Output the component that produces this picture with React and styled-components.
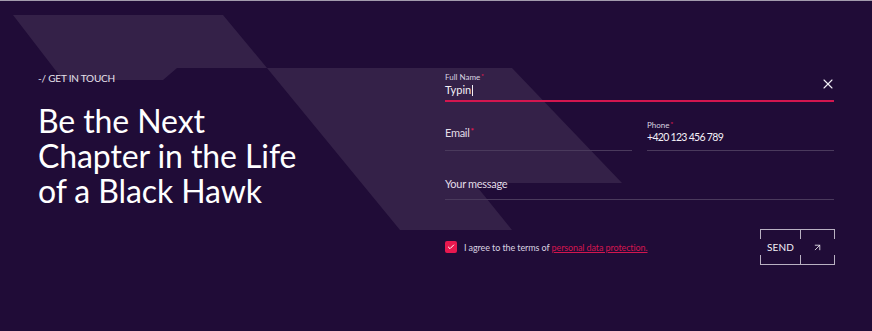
import React from 'react';
import styled, { createGlobalStyle } from 'styled-components';
import { X, ArrowUpRight, Check } from 'lucide-react';

const GlobalStyle = createGlobalStyle`
  html, body {
    margin: 0;
    padding: 0;
    background: #200c37;
  }
  body {
    font-family: Lato, "Noto Sans", sans-serif;
    -webkit-font-smoothing: antialiased;
  }
`;

const Page = styled.section`
  position: relative;
  box-sizing: border-box;
  height: 331px;
  overflow: hidden;
  background: #200c37;
  border-top: 1px solid #a39cad;
  color: #f3f0f6;
`;

const Backdrop = styled.svg`
  position: absolute;
  top: 0;
  left: 0;
  width: 872px;
  height: 330px;
  z-index: 0;
`;

const Layout = styled.div`
  position: relative;
  z-index: 1;
  display: grid;
  grid-template-columns: 1fr 389px;
  padding: 71px 38px 0 38px;
`;

const Intro = styled.div`
  display: flex;
  flex-direction: column;
`;

const Eyebrow = styled.p`
  margin: 0;
  font-size: 10px;
  line-height: 12px;
  letter-spacing: -0.2px;
  text-transform: uppercase;
  color: #e6e1eb;
`;

const Heading = styled.h1`
  margin: 19px 0 0 0;
  font-size: 32px;
  line-height: 35px;
  font-weight: 400;
  letter-spacing: -0.1px;
  color: #ffffff;
`;

const Line = styled.span`
  display: block;
  height: 35px;
`;

const Form = styled.form`
  display: flex;
  flex-direction: column;
`;

const Fields = styled.div`
  display: flex;
  flex-direction: column;
  gap: 19px;
`;

const Row = styled.div`
  display: grid;
  grid-template-columns: 1fr 1fr;
  column-gap: 15px;
`;

const Field = styled.label`
  box-sizing: border-box;
  height: 30px;
  display: flex;
  align-items: flex-end;
  padding-bottom: ${p => (p.$active ? '4px' : p.$empty ? '9px' : '6px')};
  border-bottom: ${p => (p.$active ? '2px solid #d3164f' : '1px solid #4a3a5c')};
`;

const FieldBody = styled.div`
  flex: 1;
  display: flex;
  flex-direction: column;
`;

const Label = styled.span`
  font-size: ${p => (p.$small ? '8px' : '11px')};
  line-height: ${p => (p.$small ? '10px' : '13px')};
  letter-spacing: ${p => (p.$small ? '0' : '-0.3px')};
  color: ${p => (p.$small ? '#d9d3e0' : '#e3dee8')};
`;

const Required = styled.span`
  position: relative;
  top: -0.35em;
  margin-left: 1px;
  color: #e8184f;
  font-size: 0.75em;
  font-weight: 700;
`;

const Value = styled.span`
  font-size: ${p => (p.$narrow ? '10.5px' : '11px')};
  line-height: 13px;
  letter-spacing: ${p => (p.$narrow ? '-0.7px' : '0')};
  color: #f3f0f6;
`;

const Caret = styled.span`
  display: inline-block;
  width: 1px;
  height: 11px;
  margin-left: 1px;
  vertical-align: -2px;
  background: #f3f0f6;
`;

const Clear = styled.span`
  display: flex;
  align-self: center;
  margin-right: -2px;
  color: #f3f0f6;
`;

const Footer = styled.div`
  display: flex;
  justify-content: space-between;
  align-items: center;
  margin-top: 29px;
`;

const Consent = styled.div`
  display: flex;
  align-items: center;
  gap: 7px;
  font-size: 9px;
  letter-spacing: -0.1px;
  color: #d9d3e0;
`;

const Box = styled.span`
  width: 12px;
  height: 12px;
  border-radius: 2px;
  background: #e8184f;
  display: flex;
  align-items: center;
  justify-content: center;
  color: #fff;
`;

const Link = styled.a`
  color: #d3164f;
  text-decoration: underline;
  text-underline-offset: 1px;
`;

const Send = styled.button`
  display: flex;
  align-items: stretch;
  height: 36px;
  margin-right: -1px;
  padding: 0;
  background: transparent;
  border: none;
  border-top: 1px solid #b9b1c2;
  border-bottom: 1px solid #b9b1c2;
  color: #f3f0f6;
  font-family: inherit;
  cursor: pointer;
`;

const Tick = styled.span`
  width: 1px;
  background: linear-gradient(
    to bottom,
    #b9b1c2 0,
    #b9b1c2 9px,
    transparent 9px,
    transparent calc(100% - 9px),
    #b9b1c2 calc(100% - 9px)
  );
`;

const Cell = styled.span`
  width: ${p => p.$w}px;
  display: flex;
  align-items: center;
  justify-content: center;
  font-size: 10px;
  letter-spacing: 0.1px;
  text-transform: uppercase;
`;

const App = () => {
  return (
    <>
      <GlobalStyle />
      <Page>
        <Backdrop viewBox="0 0 872 330">
          <polygon
            fill="#342148"
            points="13,14 223,14 267,67 177,67 163,79 63,79"
          />
          <polygon
            fill="#342148"
            points="267,67 512,67 622,182 474,182 512,229 400,229"
          />
        </Backdrop>
        <Layout>
          <Intro>
            <Eyebrow>-/ Get in touch</Eyebrow>
            <Heading>
              <Line>Be the Next</Line>
              <Line>Chapter in the Life</Line>
              <Line>of a Black Hawk</Line>
            </Heading>
          </Intro>
          <Form onSubmit={e => e.preventDefault()}>
            <Fields>
              <Field $active>
                <FieldBody>
                  <Label $small>
                    Full Name<Required>*</Required>
                  </Label>
                  <Value>
                    Typin
                    <Caret />
                  </Value>
                </FieldBody>
                <Clear>
                  <X size={16} strokeWidth={1.6} />
                </Clear>
              </Field>
              <Row>
                <Field $empty>
                  <FieldBody>
                    <Label>
                      Email<Required>*</Required>
                    </Label>
                  </FieldBody>
                </Field>
                <Field>
                  <FieldBody>
                    <Label $small>
                      Phone<Required>*</Required>
                    </Label>
                    <Value $narrow>+420 123 456 789</Value>
                  </FieldBody>
                </Field>
              </Row>
              <Field $empty>
                <FieldBody>
                  <Label>Your message</Label>
                </FieldBody>
              </Field>
            </Fields>
            <Footer>
              <Consent>
                <Box>
                  <Check size={8} strokeWidth={3} />
                </Box>
                <span>
                  I agree to the terms of <Link href="#">personal data protection.</Link>
                </span>
              </Consent>
              <Send type="submit">
                <Tick />
                <Cell $w={39}>Send</Cell>
                <Tick />
                <Cell $w={33}>
                  <ArrowUpRight size={11} strokeWidth={1.8} />
                </Cell>
                <Tick />
              </Send>
            </Footer>
          </Form>
        </Layout>
      </Page>
    </>
  );
};

export default App;
